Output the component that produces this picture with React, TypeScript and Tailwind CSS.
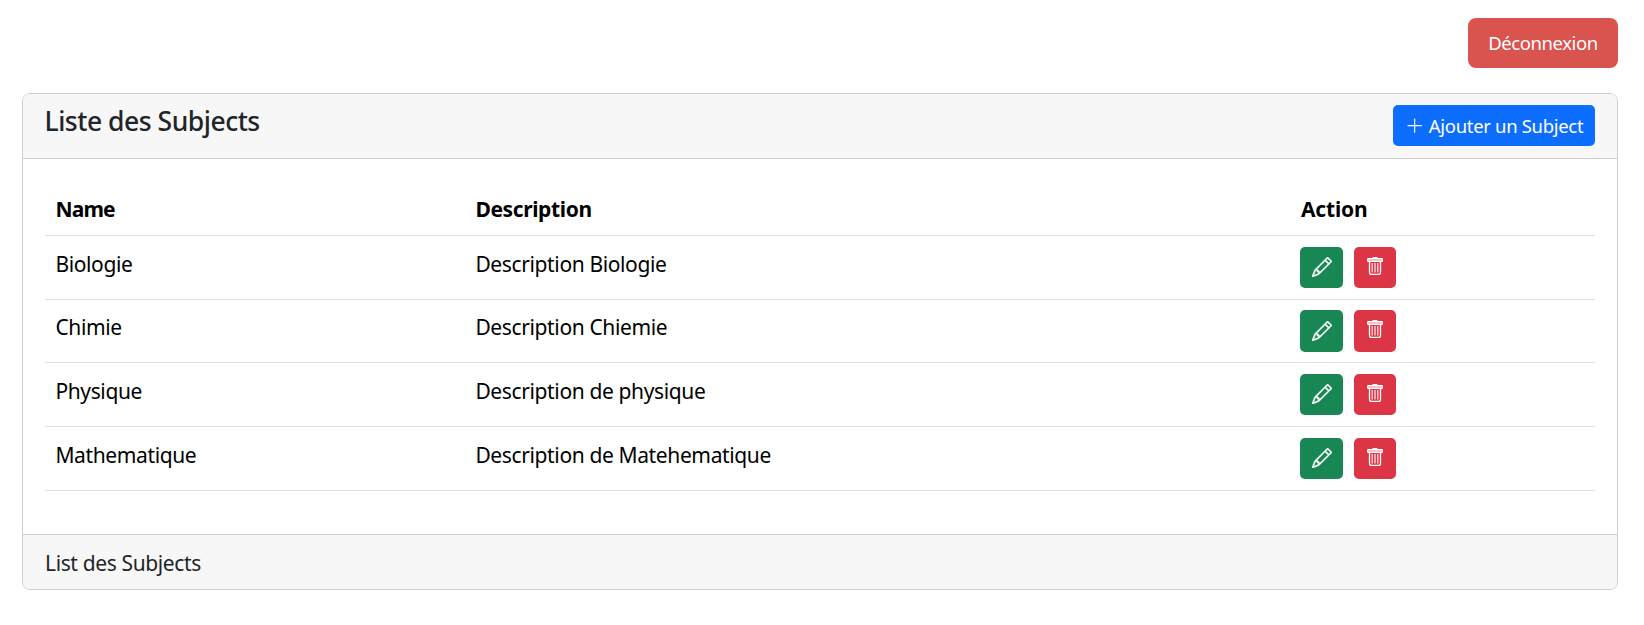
import { BsPencil, BsPlusLg } from 'react-icons/bs';

type Subject = {
  name: string;
  description: string;
  rowClass: string;
  textClass: string;
  actionClass: string;
  buttonClass: string;
};

const tall = { rowClass: 'h-[64px]', textClass: 'pt-[12px]', actionClass: 'pt-[11px]', buttonClass: 'h-[41px]' };
const short = { rowClass: 'h-[63px]', textClass: 'pt-[11px]', actionClass: 'pt-[10px]', buttonClass: 'h-[42px]' };

const subjects: Subject[] = [
  { name: 'Biologie', description: 'Description Biologie', ...tall },
  { name: 'Chimie', description: 'Description Chiemie', ...short },
  { name: 'Physique', description: 'Description de physique', ...tall },
  { name: 'Mathematique', description: 'Description de Matehematique', ...tall },
];

function TrashIcon() {
  return (
    <svg className="h-[18px] w-[16px]" viewBox="0 0 16 18" fill="none" stroke="currentColor">
      <path d="M5.5 0.5h5" />
      <rect x="0.6" y="1.6" width="14.8" height="2.8" rx="0.6" strokeWidth="1.2" fill="currentColor" fillOpacity="0.6" />
      <path d="M2.5 4.5v11a2 2 0 0 0 2 2h7a2 2 0 0 0 2-2v-11" strokeWidth="1.3" />
      <path d="M5.2 6v9.5M8 6v9.5M10.8 6v9.5" strokeWidth="1.2" strokeOpacity="0.9" />
    </svg>
  );
}

function SubjectRow({ subject }: { subject: Subject }) {
  const cell = 'border-b border-[#dee2e6] pr-[11px] align-top';
  return (
    <tr className={subject.rowClass}>
      <td className={`${cell} ${subject.textClass} pl-[10.4px]`}>{subject.name}</td>
      <td className={`${cell} ${subject.textClass} pl-[10.4px]`}>{subject.description}</td>
      <td className={`${cell} ${subject.actionClass} pl-[10px]`}>
        <div className="flex gap-[11px] text-white">
          <button
            aria-label="Modifier"
            className={`flex w-[43px] items-center justify-center rounded-[5px] bg-[#198754] pb-[1px] ${subject.buttonClass}`}
          >
            <BsPencil className="size-[20px] stroke-[0.35px]" />
          </button>
          <button
            aria-label="Supprimer"
            className={`flex w-[42px] items-start justify-center rounded-[5px] bg-[#dc3545] pt-[10px] ${subject.buttonClass}`}
          >
            <TrashIcon />
          </button>
        </div>
      </td>
    </tr>
  );
}

export default function App() {
  return (
    <div className="flex flex-col bg-white px-[22px] pt-[18px] pr-[26px] font-['Noto_Sans','Open_Sans',sans-serif] text-[21px] leading-[33px] tracking-[-0.37px] text-[#212529]">
      <button className="flex h-[50px] w-[150px] items-center justify-center self-end rounded-[8px] bg-[#d9534f] pb-[2px] text-[18.5px] tracking-[-0.42px] text-white">
        Déconnexion
      </button>

      <section className="mt-[25px] flex flex-col overflow-hidden rounded-[8px] border border-[#cfcfcf] bg-white">
        <header className="flex h-[65px] items-start justify-between border-b border-[#cfcfcf] bg-[#f7f7f7] pr-[22px] pl-[21.5px] pt-[11px]">
          <h5 className="text-[26.5px] font-medium tracking-[-0.48px]">Liste des Subjects</h5>
          <button className="flex h-[41px] w-[202px] items-center rounded-[5px] bg-[#0d6efd] pl-[12px] text-[18.5px] tracking-[-0.32px] text-white">
            <BsPlusLg className="mr-[4.6px] size-[19.25px]" />
            Ajouter un Subject
          </button>
        </header>

        <div className="h-[375px] px-[22px] pt-[21px]">
          <table className="w-full table-fixed border-separate border-spacing-0 text-black">
            <colgroup>
              <col className="w-[420px]" />
              <col className="w-[825px]" />
              <col />
            </colgroup>
            <thead>
              <tr className="h-[56px] text-left align-top">
                <th className="border-b border-[#dee2e6] pr-[11px] pl-[10.4px] pt-[13px] font-bold tracking-[-0.8px]">Name</th>
                <th className="border-b border-[#dee2e6] pr-[11px] pl-[10.4px] pt-[13px] font-bold">Description</th>
                <th className="border-b border-[#dee2e6] pr-[11px] pl-[11px] pt-[13px] font-bold tracking-[-0.2px]">Action</th>
              </tr>
            </thead>
            <tbody>
              {subjects.map((subject) => (
                <SubjectRow key={subject.name} subject={subject} />
              ))}
            </tbody>
          </table>
        </div>

        <footer className="h-[55px] border-t border-[#cfcfcf] bg-[#f7f7f7] px-[22px] pt-[12px]">
          List des Subjects
        </footer>
      </section>
    </div>
  );
}
